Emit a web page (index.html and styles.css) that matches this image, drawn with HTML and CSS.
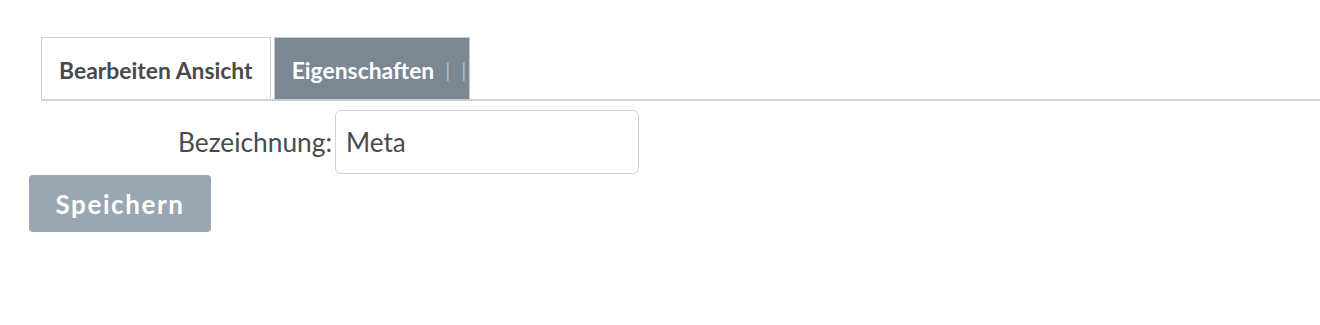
FILE: index.html
```html
<!DOCTYPE html>
<html lang="de">
<head>
    <meta charset="UTF-8">
    <meta name="viewport" content="width=device-width, initial-scale=1.0">
    <title>Eigenschaften</title>
    <link rel="stylesheet" href="styles.css">
</head>
<body>
    <div class="page">
        <ul class="tabs">
            <li class="tab">Bearbeiten Ansicht</li>
            <li class="tab active">Eigenschaften <span class="sep">|</span><span class="sep">|</span></li>
        </ul>
        <form class="props-form" onsubmit="return false">
            <div class="form-row">
                <label for="name">Bezeichnung:</label>
                <input type="text" id="name" value="Meta">
            </div>
            <button type="submit" class="save-btn">Speichern</button>
        </form>
    </div>
</body>
</html>
```

FILE: styles.css
```css
body {
    margin: 0;
    padding: 0;
    font-family: Lato, "Open Sans", sans-serif;
    color: #4a4a4a;
    background-color: #ffffff;
}

.page {
    padding: 37px 0 0 29px;
}

.tabs {
    list-style: none;
    margin: 0 0 0 12px;
    padding: 0;
    display: flex;
    gap: 3px;
    border-bottom: 2px solid #d0d3d6;
}

.tab {
    box-sizing: border-box;
    height: 64px;
    margin-bottom: -2px;
    padding: 2px 17px 0;
    display: flex;
    align-items: center;
    border: 1px solid #cfd2d5;
    border-bottom: 2px solid #d0d3d6;
    background-color: #ffffff;
    font-size: 22.9px;
    font-weight: bold;
    color: #4a4a4d;
}

.tab.active {
    background-color: #7b8792;
    border-color: #c7ccd1;
    color: #ffffff;
    padding-right: 3px;
}

.sep {
    color: #b5bec6;
    font-weight: normal;
    margin-left: 11px;
    font-size: 20px;
}

.props-form {
    margin: 0;
}

.form-row {
    display: flex;
    align-items: center;
    margin-top: 9px;
}

.form-row label {
    width: 303px;
    text-align: right;
    padding-right: 3px;
    font-size: 26.3px;
    color: #4a4a4d;
}

.form-row input {
    width: 304px;
    height: 64px;
    box-sizing: border-box;
    border: 1px solid #cfd2d5;
    border-radius: 6px;
    padding: 0 10px;
    font-family: Lato, "Open Sans", sans-serif;
    font-size: 26px;
    color: #4a4a4d;
}

.save-btn {
    display: block;
    margin-top: 1px;
    width: 182px;
    height: 57px;
    border: none;
    border-radius: 4px;
    background-color: #9aa7b3;
    color: #ffffff;
    font-family: Lato, "Open Sans", sans-serif;
    font-size: 26px;
    font-weight: bold;
    letter-spacing: 1.6px;
    cursor: pointer;
}
```
